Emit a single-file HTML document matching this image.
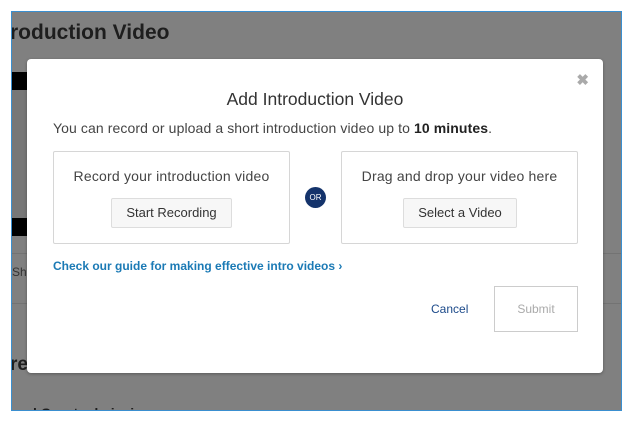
<!DOCTYPE html>
<html><head><style>
body{margin:0;width:632px;height:422px;background:#fff;position:relative;overflow:hidden;font-family:"Liberation Sans",sans-serif}
.frame{position:absolute;left:11px;top:11px;width:609px;height:398px;background:#808080;border:1px solid #3a8fd0;overflow:hidden}
.a{position:absolute}
.modal{position:absolute;left:27px;top:59px;width:576px;height:314px;background:#fff;border-radius:4px;box-shadow:0 1px 3px rgba(0,0,0,.3)}
.box{position:absolute;top:92px;width:235px;height:91px;border:1px solid #d6d6d6;border-radius:2px;text-align:center;color:#444;font-size:14px;letter-spacing:0.2px}
.btn{position:absolute;top:46px;height:28px;border:1px solid #ddd;border-radius:2px;background:#f7f7f7;font-size:13px;line-height:28px;color:#333;letter-spacing:0}
</style></head><body>
<div class="frame">
 <div class="a" style="left:-2px;top:9px;font-size:21px;font-weight:bold;color:#1e1e1e">roduction Video</div>
 <div class="a" style="left:0;top:60px;width:20px;height:18px;background:#000"></div>
 <div class="a" style="left:0;top:78px;width:20px;height:128px;background:#777"></div>
 <div class="a" style="left:0;top:206px;width:20px;height:18px;background:#000"></div>
 <div class="a" style="left:0;top:241px;width:609px;height:1px;background:#737373"></div>
 <div class="a" style="left:0;top:253px;font-size:12px;color:#333">Sho</div>
 <div class="a" style="left:0;top:291px;width:609px;height:1px;background:#737373"></div>
 <div class="a" style="left:-2px;top:342px;font-size:19px;font-weight:bold;color:#1e1e1e">re</div>
 <div class="a" style="left:0;top:393px;font-size:14px;font-weight:bold;color:#1e1e1e">eral Court admissions:</div>
</div>
<div class="modal">
 <div class="a" style="right:14px;top:12px;font-size:15px;color:#aaa;font-weight:bold">✖</div>
 <div class="a" style="left:0;width:576px;top:30px;text-align:center;font-size:17.5px;color:#333">Add Introduction Video</div>
 <div class="a" style="left:26px;top:61px;font-size:14px;color:#444;letter-spacing:0.1px">You can record or upload a short introduction video up to <b style="color:#222">10 minutes</b>.</div>
 <div class="box" style="left:26px"><div style="margin-top:16px">Record your introduction video</div><div class="btn" style="left:57px;width:119px">Start Recording</div></div>
 <div class="a" style="left:278px;top:128px;width:21px;height:21px;border-radius:50%;background:#14336b;color:#fff;font-size:8px;line-height:21px;text-align:center">OR</div>
 <div class="box" style="left:314px"><div style="margin-top:16px">Drag and drop your video here</div><div class="btn" style="left:61px;width:112px">Select a Video</div></div>
 <div class="a" style="left:26px;top:200px;font-size:12px;font-weight:bold;color:#1b7ab5">Check our guide for making effective intro videos ›</div>
 <div class="a" style="left:404px;top:243px;font-size:12px;color:#1c4a8a">Cancel</div>
 <div class="a" style="left:467px;top:227px;width:82px;height:44px;border:1px solid #ccc;text-align:center;line-height:44px;font-size:12px;color:#aaa">Submit</div>
</div>
</body></html>
